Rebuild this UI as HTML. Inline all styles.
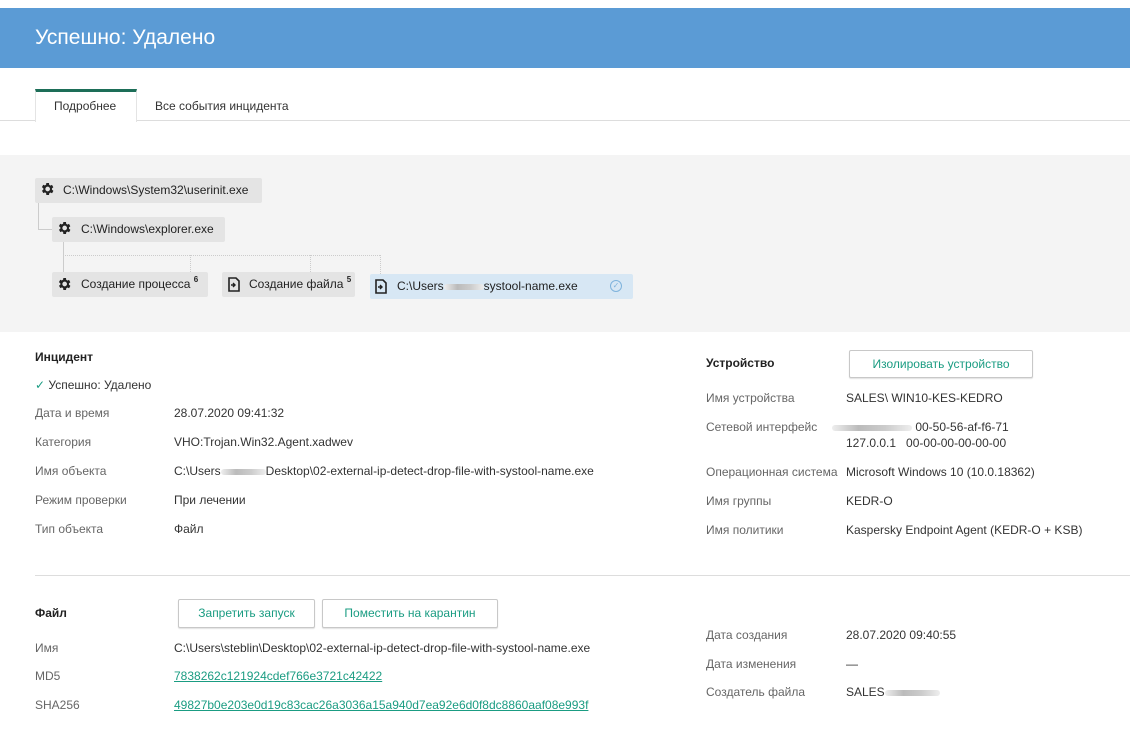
<!DOCTYPE html>
<html><head><meta charset="utf-8"><style>
*{margin:0;padding:0;box-sizing:border-box}
body{width:1130px;height:748px;position:relative;background:#fff;font-family:"Liberation Sans",sans-serif;font-size:12px;color:#333;overflow:hidden}
.a{position:absolute;white-space:nowrap;line-height:14px}
.l{color:#666}
.b{font-weight:bold;color:#222}
.node{position:absolute;background:#e4e4e4;height:25px;border-radius:2px;line-height:25px;font-size:12px;color:#222;white-space:nowrap}
.node sup{font-size:8px;font-weight:bold;line-height:0;vertical-align:6px}
.btn{position:absolute;border:1px solid #c8c8c8;border-radius:2px;background:#fff;color:#1a9c82;text-align:center;box-shadow:0 1px 1px rgba(0,0,0,.12);font-size:12px}
.lnk{color:#1a9c82;text-decoration:underline}
.blur{display:inline-block;height:6px;background:linear-gradient(90deg,#eee,#bbb,#ccc,#eee);vertical-align:middle;border-radius:3px}
svg{position:absolute}
</style></head><body>
<div style="position:absolute;left:0;top:8px;width:1130px;height:60px;background:#5b9bd5"></div>
<div class="a" style="left:35px;top:25px;font-size:21px;line-height:26px;color:#fff">Успешно: Удалено</div>

<div style="position:absolute;left:0;top:120px;width:1130px;height:1px;background:#ddd"></div>
<div style="position:absolute;left:35px;top:89px;width:102px;height:33px;background:#fff;border-top:3px solid #1d6e58;border-left:1px solid #e4e4e4;border-right:1px solid #e4e4e4"></div>
<div class="a" style="left:54px;top:99px">Подробнее</div>
<div class="a" style="left:155px;top:99px">Все события инцидента</div>

<div style="position:absolute;left:0;top:155px;width:1130px;height:177px;background:#f4f4f4"></div>
<svg width="1130" height="748" style="left:0;top:0">
<path d="M38.5 202V229.5H52" stroke="#ccc" fill="none"/>
<path d="M63.5 241V272" stroke="#ccc" fill="none"/>
<path d="M63 255.5H380M190.5 255V272M310.5 255V272M380.5 255V274" stroke="#ccc" stroke-dasharray="1 1" fill="none"/>
</svg>
<div class="node" style="left:35px;top:178px;width:227px;padding-left:28px">C:\Windows\System32\userinit.exe</div>
<div class="node" style="left:52px;top:217px;width:173px;padding-left:29px">C:\Windows\explorer.exe</div>
<div class="node" style="left:52px;top:272px;width:156px;padding-left:29px">Создание процесса <sup>6</sup></div>
<div class="node" style="left:222px;top:272px;width:133px;padding-left:27px">Создание файла <sup>5</sup></div>
<div class="node" style="left:370px;top:274px;width:263px;background:#d7e7f4;padding-left:27px">C:\Users<span class="blur" style="width:40px"></span>systool-name.exe<span style="position:absolute;left:240px;top:6px;width:12px;height:12px;border:1px solid #7fb3dc;border-radius:50%;font-size:8px;line-height:10px;text-align:center;color:#7fb3dc">✓</span></div>
<svg width="16" height="16" viewBox="0 0 24 24" style="left:39px;top:181px"><path fill="#222" d="M19.4 13a7.5 7.5 0 000-2l2.1-1.6-2-3.5-2.5 1a7 7 0 00-1.7-1L15 3h-4l-.4 2.7a7 7 0 00-1.7 1l-2.5-1-2 3.5L6.6 11a7.5 7.5 0 000 2l-2.1 1.6 2 3.5 2.5-1a7 7 0 001.7 1L11 21h4l.4-2.7a7 7 0 001.7-1l2.5 1 2-3.5zM13 15.5A3.5 3.5 0 1113 8.5a3.5 3.5 0 010 7z"/></svg>
<svg width="16" height="16" viewBox="0 0 24 24" style="left:56px;top:220px"><path fill="#222" d="M19.4 13a7.5 7.5 0 000-2l2.1-1.6-2-3.5-2.5 1a7 7 0 00-1.7-1L15 3h-4l-.4 2.7a7 7 0 00-1.7 1l-2.5-1-2 3.5L6.6 11a7.5 7.5 0 000 2l-2.1 1.6 2 3.5 2.5-1a7 7 0 001.7 1L11 21h4l.4-2.7a7 7 0 001.7-1l2.5 1 2-3.5zM13 15.5A3.5 3.5 0 1113 8.5a3.5 3.5 0 010 7z"/></svg>
<svg width="16" height="16" viewBox="0 0 24 24" style="left:56px;top:276px"><path fill="#222" d="M19.4 13a7.5 7.5 0 000-2l2.1-1.6-2-3.5-2.5 1a7 7 0 00-1.7-1L15 3h-4l-.4 2.7a7 7 0 00-1.7 1l-2.5-1-2 3.5L6.6 11a7.5 7.5 0 000 2l-2.1 1.6 2 3.5 2.5-1a7 7 0 001.7 1L11 21h4l.4-2.7a7 7 0 001.7-1l2.5 1 2-3.5zM13 15.5A3.5 3.5 0 1113 8.5a3.5 3.5 0 010 7z"/></svg>
<svg width="12" height="15" viewBox="0 0 12 15" style="left:228px;top:277px"><path d="M1 1h7l3 3v10H1z" fill="none" stroke="#222" stroke-width="1.6"/><path d="M3 8h4M5 6l2 2-2 2" fill="none" stroke="#222" stroke-width="1.4"/></svg>
<svg width="12" height="15" viewBox="0 0 12 15" style="left:375px;top:279px"><path d="M1 1h7l3 3v10H1z" fill="none" stroke="#222" stroke-width="1.6"/><path d="M3 8h4M5 6l2 2-2 2" fill="none" stroke="#222" stroke-width="1.4"/></svg>

<div class="a b" style="left:35px;top:350px">Инцидент</div>
<div class="a" style="left:35px;top:378px"><span style="color:#1a9c82">✓</span> Успешно: Удалено</div>
<div class="a l" style="left:35px;top:406px">Дата и время</div><div class="a" style="left:174px;top:406px">28.07.2020 09:41:32</div>
<div class="a l" style="left:35px;top:435px">Категория</div><div class="a" style="left:174px;top:435px">VHO:Trojan.Win32.Agent.xadwev</div>
<div class="a l" style="left:35px;top:464px">Имя объекта</div><div class="a" style="left:174px;top:464px">C:\Users<span class="blur" style="width:45px"></span>Desktop\02-external-ip-detect-drop-file-with-systool-name.exe</div>
<div class="a l" style="left:35px;top:493px">Режим проверки</div><div class="a" style="left:174px;top:493px">При лечении</div>
<div class="a l" style="left:35px;top:522px">Тип объекта</div><div class="a" style="left:174px;top:522px">Файл</div>

<div class="a b" style="left:706px;top:356px">Устройство</div>
<div class="btn" style="left:849px;top:350px;width:184px;height:28px;line-height:26px">Изолировать устройство</div>
<div class="a l" style="left:706px;top:391px">Имя устройства</div><div class="a" style="left:846px;top:391px">SALES\ WIN10-KES-KEDRO</div>
<div class="a l" style="left:706px;top:420px">Сетевой интерфейс</div><div class="a" style="left:846px;top:420px"><span class="blur" style="width:80px;margin-left:-14px"></span>&nbsp;00-50-56-af-f6-71</div>
<div class="a" style="left:846px;top:436px">127.0.0.1 &nbsp;&nbsp;00-00-00-00-00-00</div>
<div class="a l" style="left:706px;top:465px">Операционная система</div><div class="a" style="left:846px;top:465px">Microsoft Windows 10 (10.0.18362)</div>
<div class="a l" style="left:706px;top:494px">Имя группы</div><div class="a" style="left:846px;top:494px">KEDR-O</div>
<div class="a l" style="left:706px;top:523px">Имя политики</div><div class="a" style="left:846px;top:523px">Kaspersky Endpoint Agent (KEDR-O + KSB)</div>

<div style="position:absolute;left:35px;top:575px;width:1095px;height:1px;background:#ddd"></div>

<div class="a b" style="left:35px;top:606px">Файл</div>
<div class="btn" style="left:178px;top:599px;width:137px;height:29px;line-height:27px">Запретить запуск</div>
<div class="btn" style="left:322px;top:599px;width:176px;height:29px;line-height:27px">Поместить на карантин</div>
<div class="a l" style="left:35px;top:641px">Имя</div><div class="a" style="left:174px;top:641px">C:\Users\steblin\Desktop\02-external-ip-detect-drop-file-with-systool-name.exe</div>
<div class="a l" style="left:35px;top:669px">MD5</div><div class="a lnk" style="left:174px;top:669px">7838262c121924cdef766e3721c42422</div>
<div class="a l" style="left:35px;top:698px">SHA256</div><div class="a lnk" style="left:174px;top:698px">49827b0e203e0d19c83cac26a3036a15a940d7ea92e6d0f8dc8860aaf08e993f</div>

<div class="a l" style="left:706px;top:628px">Дата создания</div><div class="a" style="left:846px;top:628px">28.07.2020 09:40:55</div>
<div class="a l" style="left:706px;top:657px">Дата изменения</div><div class="a" style="left:846px;top:657px">—</div>
<div class="a l" style="left:706px;top:685px">Создатель файла</div><div class="a" style="left:846px;top:685px">SALES<span class="blur" style="width:55px"></span></div>
</body></html>
